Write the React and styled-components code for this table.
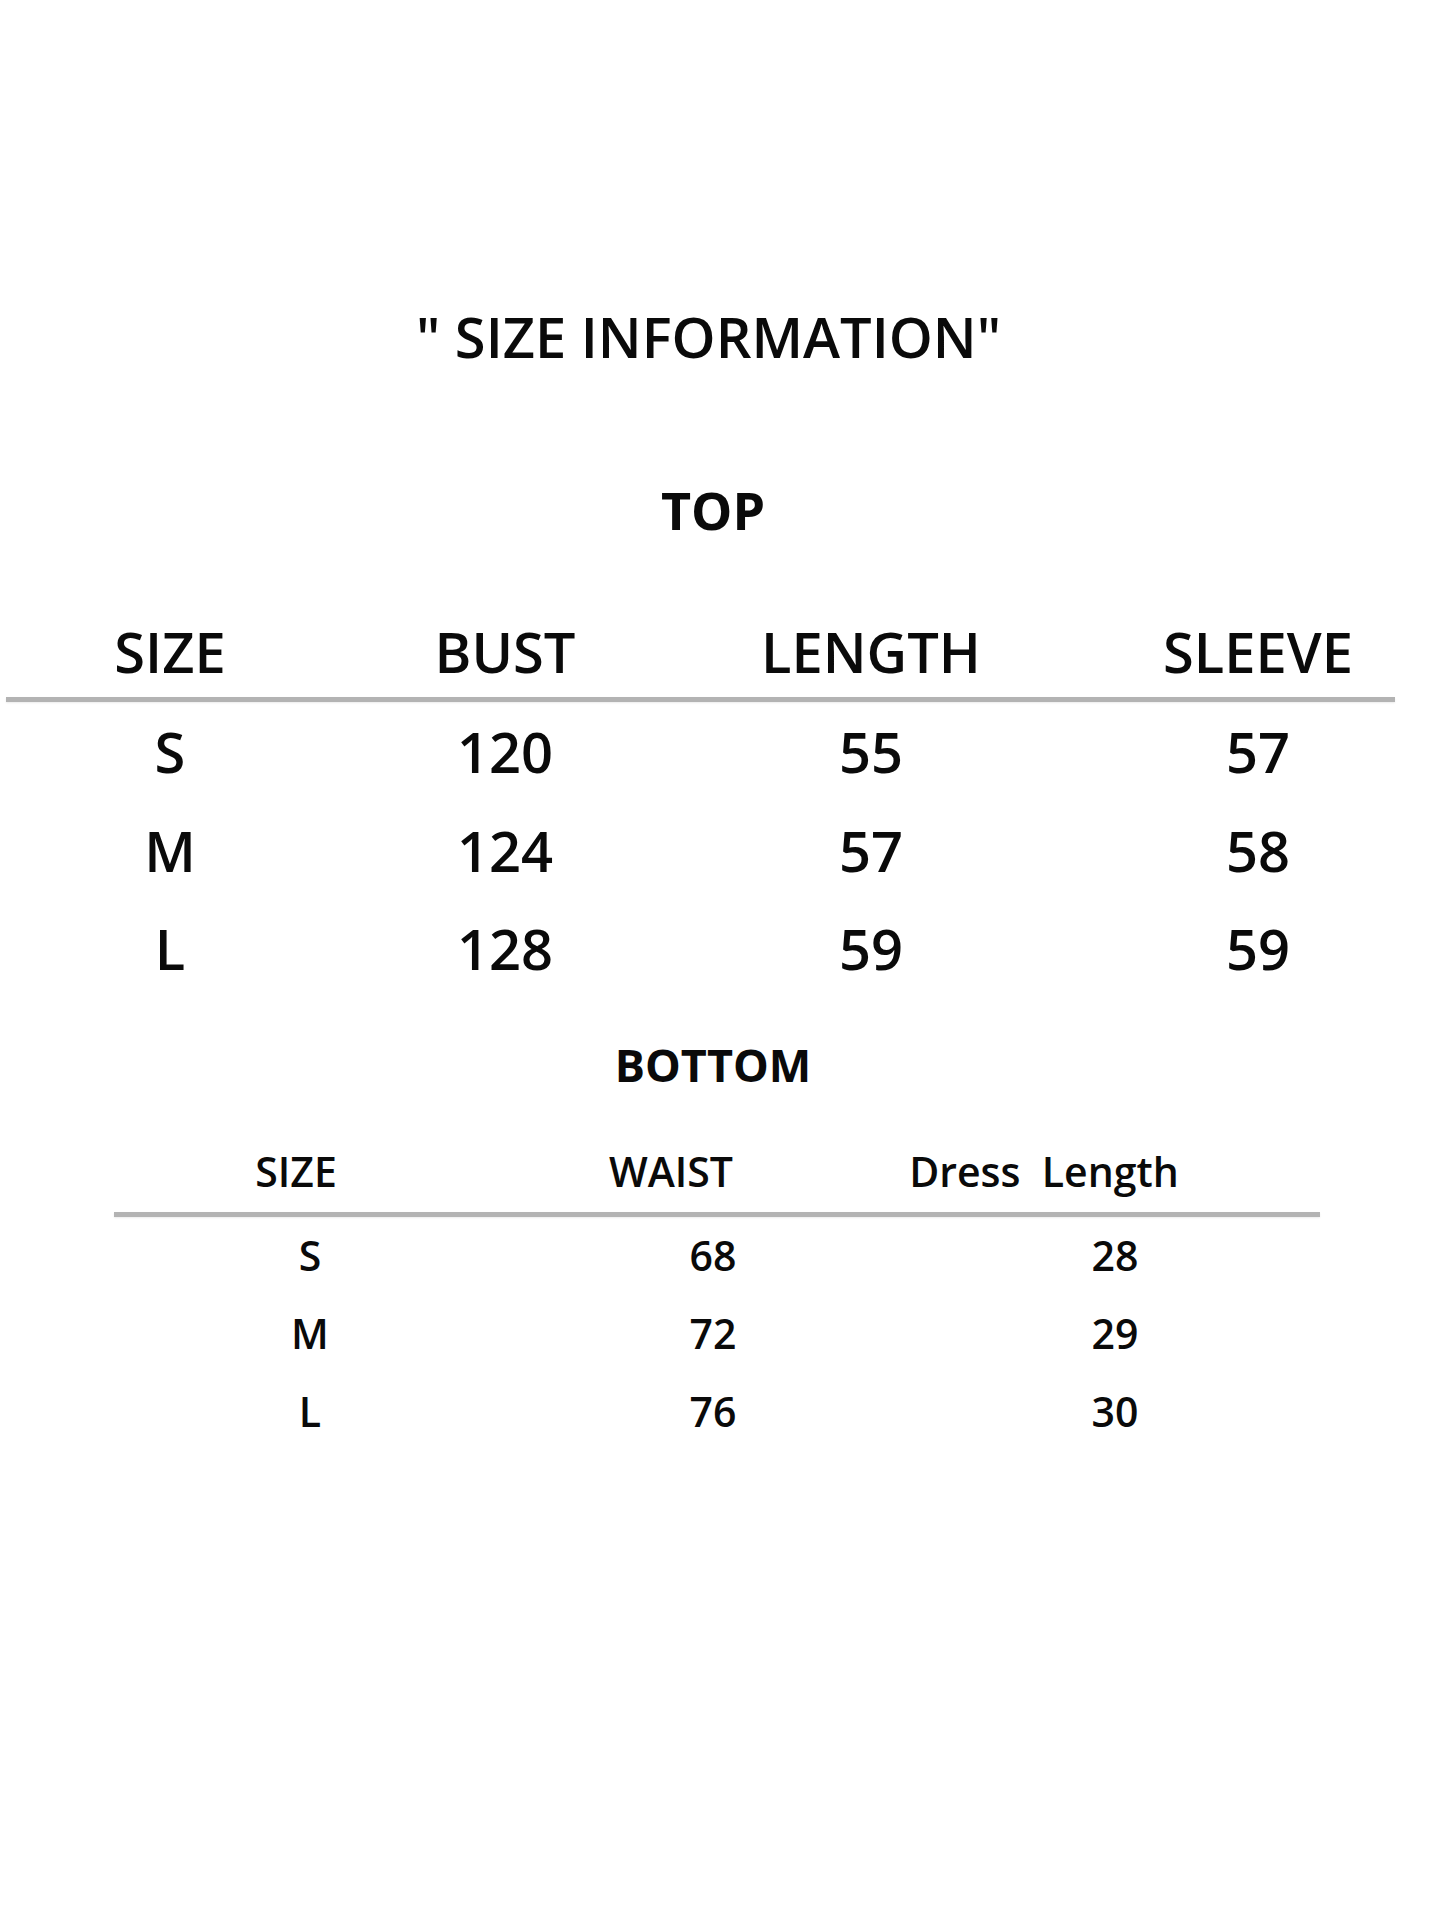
import styled, { createGlobalStyle } from "styled-components";

const GlobalStyle = createGlobalStyle`
  html, body {
    margin: 0;
    padding: 0;
    background: #ffffff;
  }
  body {
    font-family: "Open Sans", "Liberation Sans", sans-serif;
    color: #0a0a0a;
  }
`;

const Sheet = styled.div`
  width: 1445px;
  min-height: 1927px;
  background: #ffffff;
  display: flex;
  flex-direction: column;
  padding-top: 308px;
  box-sizing: border-box;
`;

const Title = styled.h1`
  margin: 0;
  font-size: 56px;
  line-height: 56px;
  font-weight: 600;
  text-align: center;
  padding-right: 28px;
`;

const SectionTitle = styled.h2`
  margin: ${(p) => p.$top}px 0 0;
  font-size: ${(p) => p.$size}px;
  line-height: ${(p) => p.$size}px;
  font-weight: 700;
  text-align: center;
  padding-right: 19px;
`;

const Row = styled.div`
  display: grid;
  grid-template-columns: ${(p) => p.$cols};
  margin-top: ${(p) => p.$top}px;
  font-size: ${(p) => p.$size}px;
  line-height: ${(p) => p.$size}px;
  font-weight: ${(p) => p.$weight};
  white-space: pre;
`;

const Cell = styled.div`
  text-align: center;
`;

const Rule = styled.div`
  margin: ${(p) => p.$top}px 0 0 ${(p) => p.$left}px;
  width: ${(p) => p.$width}px;
  height: 5px;
  background: #b3b3b3;
  box-shadow: 0 1px 2px rgba(0, 0, 0, 0.08);
`;

const topCols = "340px 330px 402px 372px";
const topRows = [
  ["S", "120", "55", "57"],
  ["M", "124", "57", "58"],
  ["L", "128", "59", "59"],
];

const bottomHeadCols = "592px 158px 588px";
const bottomCols = "620px 186px 618px";
const bottomRows = [
  ["S", "68", "28"],
  ["M", "72", "29"],
  ["L", "76", "30"],
];

export default function App() {
  return (
    <>
      <GlobalStyle />
      <Sheet>
        <Title>" SIZE INFORMATION"</Title>

        <SectionTitle $top={120} $size={52}>TOP</SectionTitle>
        <Row $cols={topCols} $top={87} $size={56} $weight={600}>
          <Cell>SIZE</Cell>
          <Cell>BUST</Cell>
          <Cell>LENGTH</Cell>
          <Cell>SLEEVE</Cell>
        </Row>
        <Rule $top={18} $left={6} $width={1389} />
        {topRows.map((r, i) => (
          <Row key={r[0]} $cols={topCols} $top={i === 0 ? 21 : 42.5} $size={56} $weight={600}>
            {r.map((v, j) => (
              <Cell key={j}>{v}</Cell>
            ))}
          </Row>
        ))}

        <SectionTitle $top={66} $size={45}>BOTTOM</SectionTitle>
        <Row $cols={bottomHeadCols} $top={64} $size={41} $weight={600}>
          <Cell>SIZE</Cell>
          <Cell>WAIST</Cell>
          <Cell>Dress  Length</Cell>
        </Row>
        <Rule $top={20} $left={114} $width={1206} />
        {bottomRows.map((r, i) => (
          <Row key={r[0]} $cols={bottomCols} $top={i === 0 ? 18 : 37} $size={41} $weight={600}>
            {r.map((v, j) => (
              <Cell key={j}>{v}</Cell>
            ))}
          </Row>
        ))}
      </Sheet>
    </>
  );
}
